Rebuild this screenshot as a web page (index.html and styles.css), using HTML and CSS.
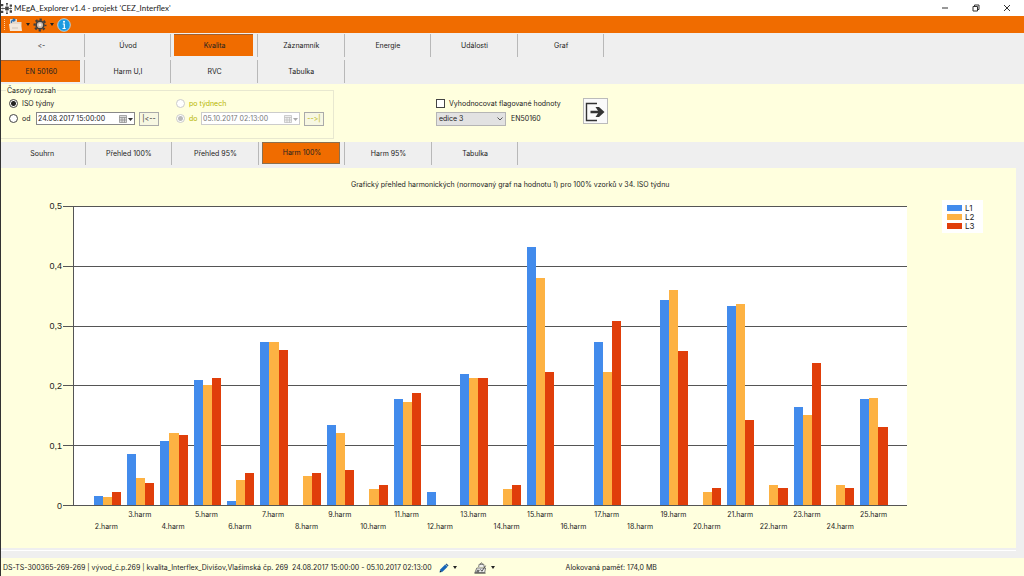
FILE: index.html
```html
<!DOCTYPE html>
<html lang="cs">
<head>
<meta charset="utf-8">
<title>MEgA_Explorer v1.4 - projekt 'CEZ_Interflex'</title>
<link rel="stylesheet" href="styles.css">
</head>
<body>
<div class="window">
  <header class="titlebar">
    <svg class="app-icon" viewBox="0 0 12 12" aria-hidden="true"><g fill="#444"><path d="M4.500 4h4v4h-4z"/><path d="M0 1h2.500v2.500H0zM0 8.500h2.500V11H0zM9.500 1.500H12v2.500H9.500zM9.500 8H12v2.500H9.500zM5.500 0h2v1.500h-2zM5.500 10.500h2V12h-2z"/></g><path d="M0 6h4.500M8.500 6H12M2 5v2M10.500 5v2M6.500 1v3M6.500 8v3" stroke="#555"/></svg>
    <h1 class="title">MEgA_Explorer v1.4 - projekt 'CEZ_Interflex'</h1>
    <div class="window-buttons">
      <button class="window-button" aria-label="Minimalizovat"><svg viewBox="0 0 8 8"><path d="M1 4h6"/></svg></button>
      <button class="window-button" aria-label="Obnovit"><svg viewBox="0 0 8 8"><path d="M1 2.500h4.500V7H1zM2.500 2.500V1H7v4.500H5.500"/></svg></button>
      <button class="window-button" aria-label="Zavřít"><svg viewBox="0 0 8 8"><path d="M1 1l6 6M7 1L1 7"/></svg></button>
    </div>
  </header>

  <div class="toolbar">
    <span class="grip"></span>
    <button class="tool" aria-label="Otevřít">
      <svg class="tool-icon" viewBox="0 0 14 14"><path d="M1 5V1h7v3h4.500v9H1z" fill="#e6d9cc"/><path d="M0 6h11.500l1.500 7H1z" fill="#f3e8dc"/><path d="M2.500 5C2 3 3 2 5.500 2M4.300 .5L6 2 4.300 3.500" fill="none" stroke="#2b6fae" stroke-width="1.300"/><path d="M3 10h6" stroke="#cfc2b4"/></svg>
      <span class="caret"></span>
    </button>
    <button class="tool" aria-label="Nastavení">
      <svg class="tool-icon" viewBox="0 0 14 14"><circle cx="7" cy="7" r="5.500" fill="none" stroke="#3d3d3d" stroke-width="2" stroke-dasharray="2.300 2.020" stroke-dashoffset="1.150"/><circle cx="7" cy="7" r="3.900" fill="#c9b8a8" stroke="#3d3d3d" stroke-width="1.600"/><circle cx="7" cy="7" r="1.400" fill="#f5ece4"/></svg>
      <span class="caret"></span>
    </button>
    <button class="tool" aria-label="Informace">
      <svg class="tool-icon" viewBox="0 0 14 14"><circle cx="7" cy="7" r="6.300" fill="#1b9ae0" stroke="#c8e4f5" stroke-width=".8"/><circle cx="7" cy="3.700" r="1" fill="#fff"/><path d="M5.700 6h1.600v4.500M5.500 10.500h3.200" fill="none" stroke="#fff" stroke-width="1.200"/></svg>
    </button>
  </div>

  <nav class="tabs">
    <div class="tab"><button class="tab-button">&lt;-</button></div>
    <div class="tab"><button class="tab-button">Úvod</button></div>
    <div class="tab"><button class="tab-button active">Kvalita</button></div>
    <div class="tab"><button class="tab-button">Záznamník</button></div>
    <div class="tab"><button class="tab-button">Energie</button></div>
    <div class="tab"><button class="tab-button">Události</button></div>
    <div class="tab"><button class="tab-button">Graf</button></div>
  </nav>
  <nav class="tabs">
    <div class="tab"><button class="tab-button active">EN 50160</button></div>
    <div class="tab"><button class="tab-button">Harm U,I</button></div>
    <div class="tab"><button class="tab-button">RVC</button></div>
    <div class="tab"><button class="tab-button">Tabulka</button></div>
  </nav>

  <section class="filters">
    <fieldset class="range">
      <legend>Časový rozsah</legend>
      <div class="range-half">
        <label class="choice"><input class="radio" type="radio" name="from" checked>ISO týdny</label>
        <div class="range-row">
          <label class="choice short"><input class="radio" type="radio" name="from">od</label>
          <div class="date"><input class="date-text" type="text" value="24.08.2017 15:00:00" aria-label="Datum od"><svg class="calendar" viewBox="0 0 16 10"><path d="M1.500 1.500h7v7h-7zM1.500 3.500h7M4 3.500v5M6.500 3.500v5M1.500 6h7" fill="#ddd" stroke="#888" stroke-width=".7"/><path d="M10 4h5l-2.500 3z" fill="#333"/></svg></div>
          <button class="step">|&lt;--</button>
        </div>
      </div>
      <div class="range-half disabled">
        <label class="choice"><input class="radio" type="radio" name="to" disabled>po týdnech</label>
        <div class="range-row">
          <label class="choice short"><input class="radio" type="radio" name="to" checked disabled>do</label>
          <div class="date"><input class="date-text" type="text" value="05.10.2017 02:13:00" aria-label="Datum do" disabled><svg class="calendar" viewBox="0 0 16 10"><path d="M1.500 1.500h7v7h-7zM1.500 3.500h7M4 3.500v5M6.500 3.500v5M1.500 6h7" fill="#eee" stroke="#bbb" stroke-width=".7"/><path d="M10 4h5l-2.500 3z" fill="#aaa"/></svg></div>
          <button class="step" disabled>--&gt;|</button>
        </div>
      </div>
    </fieldset>
    <div class="options">
      <label class="choice"><input class="check" type="checkbox">Vyhodnocovat flagované hodnoty</label>
      <div class="edition">
        <div class="select-box">
          <select class="select" id="edition"><option>edice 3</option></select>
          <svg class="chevron" viewBox="0 0 6 4"><path d="M.5 .5L3 3 5.500 .5" fill="none" stroke="#555"/></svg>
        </div>
        <label for="edition">EN50160</label>
      </div>
    </div>
    <button class="export" aria-label="Exportovat">
      <svg viewBox="0 0 22 22"><path d="M13 3.500H2.500v17H13" fill="none" stroke="#333" stroke-width="1.400"/><path d="M6.500 10.700H14L11.500 7H15l5.500 5-5.500 5h-3.500L14 13.300H6.500z" fill="#333"/></svg>
    </button>
  </section>

  <nav class="tabs tabs-inner">
    <div class="tab"><button class="tab-button">Souhrn</button></div>
    <div class="tab"><button class="tab-button">Přehled 100%</button></div>
    <div class="tab"><button class="tab-button">Přehled 95%</button></div>
    <div class="tab"><button class="tab-button active">Harm 100%</button></div>
    <div class="tab"><button class="tab-button">Harm 95%</button></div>
    <div class="tab"><button class="tab-button">Tabulka</button></div>
  </nav>

  <main class="panel">
    <h2 class="chart-title">Grafický přehled harmonických (normovaný graf na hodnotu 1) pro 100% vzorků v 34. ISO týdnu</h2>
    <div class="chart">
      <div class="axis-y"><span>0,5</span><span>0,4</span><span>0,3</span><span>0,2</span><span>0,1</span><span>0</span></div>
      <div class="ticks"><i></i><i></i><i></i><i></i><i></i><i></i></div>
      <div class="plot">
        <div class="grid"><i></i><i></i><i></i><i></i><i></i><i></i></div>
        <div class="bars" id="bars"></div>
      </div>
      <ul class="legend">
        <li><span class="swatch l1"></span>L1</li>
        <li><span class="swatch l2"></span>L2</li>
        <li><span class="swatch l3"></span>L3</li>
      </ul>
      <div class="axis-x" id="labels"></div>
    </div>
  </main>

  <footer class="status">
    <span class="status-path">DS-TS-300365-269-269 | vývod_č.p.269 | kvalita_Interflex_Divišov,Vlašimská čp. 269&nbsp; 24.08.2017 15:00:00 - 05.10.2017 02:13:00</span>
    <button class="tool" aria-label="Upravit"><svg class="status-icon" viewBox="0 0 12 12"><path d="M1 11l1-3.500L7.500 2 10 4.500l-5.500 5.500z" fill="#1565b8" stroke="#1565b8" stroke-width=".6"/><path d="M8 1.500l1-1L11.500 3l-1 1z" fill="#174a80"/><path d="M1 11l.6-2 1.400 1.400z" fill="#222"/></svg><span class="caret"></span></button>
    <button class="tool" aria-label="Kontrola"><svg class="status-icon wide" viewBox="0 0 14 12"><path d="M5 5l.5-3h5l.5 3M1 11l2-5h9.500l-1 5z" fill="#eee" stroke="#555" stroke-width=".8"/><path d="M6.500 2L8 .6 9.500 2M3 8.500h3M2.500 10h3M7 7.500l1.500 2 4-6" fill="none" stroke="#444"/><path d="M.5 11.500h12" stroke="#444"/></svg><span class="caret"></span></button>
    <span class="memory">Alokovaná paměť: 174,0 MB</span>
  </footer>
</div>
<script src="script.js"></script>
</body>
</html>
```
FILE: styles.css
```css
* { box-sizing: border-box; }

body {
  margin: 0;
  color: #222;
  font: 7px/10px Inter, "Liberation Sans", sans-serif;
  font-variant-ligatures: none;
}

button, input, select { font: inherit; font-variant-ligatures: none; color: inherit; }
button { padding: 0; border: 0; background: none; }

.window {
  display: flex;
  flex-direction: column;
  min-height: 100vh;
  border-left: 1px solid #333;
  background: #efefef;
}

/* Title bar */
.titlebar {
  display: flex;
  align-items: center;
  height: 16px;
  background: #fff;
}
.app-icon { width: 11px; height: 11px; margin-right: 2px; }
.title {
  flex: 1;
  margin: 0;
  font: 8px/12px Lato, "Open Sans", sans-serif;
}
.window-buttons { display: flex; padding-right: 2px; }
.window-button { display: grid; place-items: center; width: 31px; height: 15px; }
.window-button svg { width: 8px; height: 8px; fill: none; stroke: #333; stroke-width: 1; }

/* Toolbar */
.toolbar {
  display: flex;
  align-items: center;
  gap: 3px;
  height: 17px;
  padding-left: 3px;
  background: #f06c00;
}
.grip { width: 2px; height: 11px; border-left: 1px dotted #ffd0a0; }
.tool { display: flex; align-items: center; gap: 4px; }
.toolbar .tool { gap: 3px; }
.tool-icon { width: 14px; height: 14px; }
.caret { border: 2px solid transparent; border-top: 3px solid #222; border-bottom: 0; }

/* Tabs */
.tabs { display: flex; height: 25px; padding-top: 1px; background: #efefef; }
.tabs + .tabs { height: 26px; padding-top: 2px; }
.tab { display: flex; flex: 0 0 8.47%; height: 23px; }
.tab::after { content: ""; width: 1px; margin-left: 4px; background: #b8b8b8; }
.tab-button { width: calc(100% - 8px); padding-left: 2px; }
.tab-button.active { height: 22px; border-top: 1px solid #a06030; background: #f06c00; }
.tabs-inner { height: 26px; padding: 0 0 0 1px; }
.tabs-inner .active { border: 1px solid #8a7050; }

/* Filters */
.filters { display: flex; height: 58px; background: #ffffde; }
.range {
  display: flex;
  width: 333px;
  height: 53px;
  margin: 2px 0 0;
  padding: 3px 0 0 8px;
  border: 1px solid #e8e8d0;
  border-left: 0;
}
.range legend { margin-left: -3px; padding: 0 1px; line-height: 9px; }
.range-half { width: 167px; }
.range-half.disabled { width: 150px; }
.range-row { display: flex; align-items: center; height: 15px; margin-top: 2px; }
.choice { display: flex; align-items: center; gap: 4px; height: 11px; white-space: nowrap; }
.short { width: 27px; }
.disabled .short { width: 25px; }
.disabled { color: #b5b500; }
.radio, .check { flex: none; width: 9px; height: 9px; margin: 0; border: 1px solid #444; appearance: none; background: #fff; }
.radio { border-radius: 50%; }
.radio:checked { background: radial-gradient(#222 0 2px, #fff 3px); }
.radio:disabled { border-color: #ccc; }
.radio:disabled:checked { background: radial-gradient(#bbb 0 2px, #fff 3px); }
.date {
  display: flex;
  align-items: center;
  width: 99px;
  height: 13px;
  border: 1px solid #888;
  background: #fff;
}
.date-text { flex: 1; min-width: 0; padding: 0 1px; border: 0; background: none; }
.disabled .date { border-color: #ccc; color: #777; }
.calendar { width: 16px; height: 10px; }
.step { width: 20px; height: 14px; margin-left: 4px; border: 1px solid #aaa; background: #f7f7e2; line-height: 10px; }
.options { margin: 14px 0 0 102px; width: 122px; }
.edition { display: flex; align-items: center; gap: 5px; margin-top: 3px; }
.select-box { position: relative; width: 70px; }
.select {
  display: block;
  width: 100%;
  height: 14px;
  padding: 0 2px;
  border: 1px solid #b5b5b5;
  border-radius: 0;
  appearance: none;
  background: #e2e2e2;
}
.chevron { position: absolute; top: 5px; right: 3px; width: 6px; height: 4px; pointer-events: none; }
.export {
  width: 25px;
  height: 26px;
  margin: 14px 0 0 25px;
  border: 1px solid #bbb;
  background: #fafafa;
}
.export svg { display: block; width: 22px; height: 22px; }

/* Chart */
.panel {
  flex: 1;
  margin-right: 8px;
  padding: 12px 0 0;
  border-bottom: 1px solid #fff;
  background: linear-gradient(#ffffde, #ffffde) top / 100% calc(100% - 2px) no-repeat #efefef;
}
.chart-title { margin: 0 0 16px; padding-left: 350px; font: inherit; }
.chart {
  display: grid;
  grid-template: 300px 40px / 62px 10px minmax(0, 1fr) 109px;
}
.axis-y, .ticks, .grid { display: flex; flex-direction: column; justify-content: space-between; }
.axis-y { margin: -5px 0; padding-right: 1px; font: 9px/10px "Liberation Sans", Arial, sans-serif; text-align: right; }
.ticks i, .grid i { height: 1px; background: #555; }
.plot { display: grid; border-left: 1px solid #555; background: #fff; }
.grid, .bars { grid-area: 1 / 1; }
.bars, .axis-x { display: flex; padding: 0 2%; }
.bars { z-index: 1; padding-bottom: 1px; }
.group { display: flex; flex: 1; align-items: flex-end; padding: 0 3px; }
.bar { flex: 1; }
.l1 { background: #428bec; }
.l2 { background: #fdb243; }
.l3 { background: #e03e0a; }
.axis-x { grid-column: 3; padding-top: 4px; }
.axis-x span { display: flex; flex: 1 0 0; justify-content: center; min-width: 0; white-space: nowrap; }
.axis-x span:nth-child(odd) { padding-top: 12px; }
.legend {
  align-self: start;
  width: 41px;
  margin: -6px 0 0 35px;
  padding: 3px 5px;
  background: #fff;
  font-size: 8px;
  list-style: none;
}
.legend li { display: flex; align-items: center; gap: 3px; height: 9px; }
.swatch { width: 15px; height: 6px; }

/* Status bar */
.status {
  display: flex;
  align-items: center;
  height: 18px;
  margin-top: 7px;
  padding: 1px 0 0 2px;
  background: #ffffde;
}
.status .tool { margin-left: 7px; }
.status .tool + .tool { margin-left: 17px; }
.status-icon { width: 10px; height: 10px; }
.status-icon.wide { width: 13px; height: 12px; }
.memory { margin-left: 71px; }
```
FILE: script.js
```js
// Normalised L1, L2, L3 values for harmonics 2 to 25.
const values = [
  [.015, .014, .021], [.085, .045, .036], [.107, .12, .117], [.209, .201, .212],
  [.006, .042, .054], [.272, .272, .26], [0, .049, .054], [.134, .12, .058],
  [0, .026, .034], [.177, .172, .187], [.021, 0, 0], [.219, .212, .212],
  [0, .026, .034], [.432, .38, .222], [0, 0, 0], [.273, .222, .307],
  [0, 0, 0], [.343, .36, .258], [0, .021, .029], [.333, .336, .142],
  [0, .034, .029], [.164, .15, .238], [0, .034, .029], [.177, .179, .13]
];
const axisMax = 0.5;
const bars = document.getElementById("bars");
const labels = document.getElementById("labels");

values.forEach((row, index) => {
  const group = document.createElement("div");
  group.className = "group";
  row.forEach((value, phase) => {
    const bar = document.createElement("div");
    bar.className = "bar l" + (phase + 1);
    bar.style.height = (value / axisMax) * 100 + "%";
    group.append(bar);
  });
  bars.append(group);

  const label = document.createElement("span");
  label.textContent = index + 2 + ".harm";
  labels.append(label);
});
```
